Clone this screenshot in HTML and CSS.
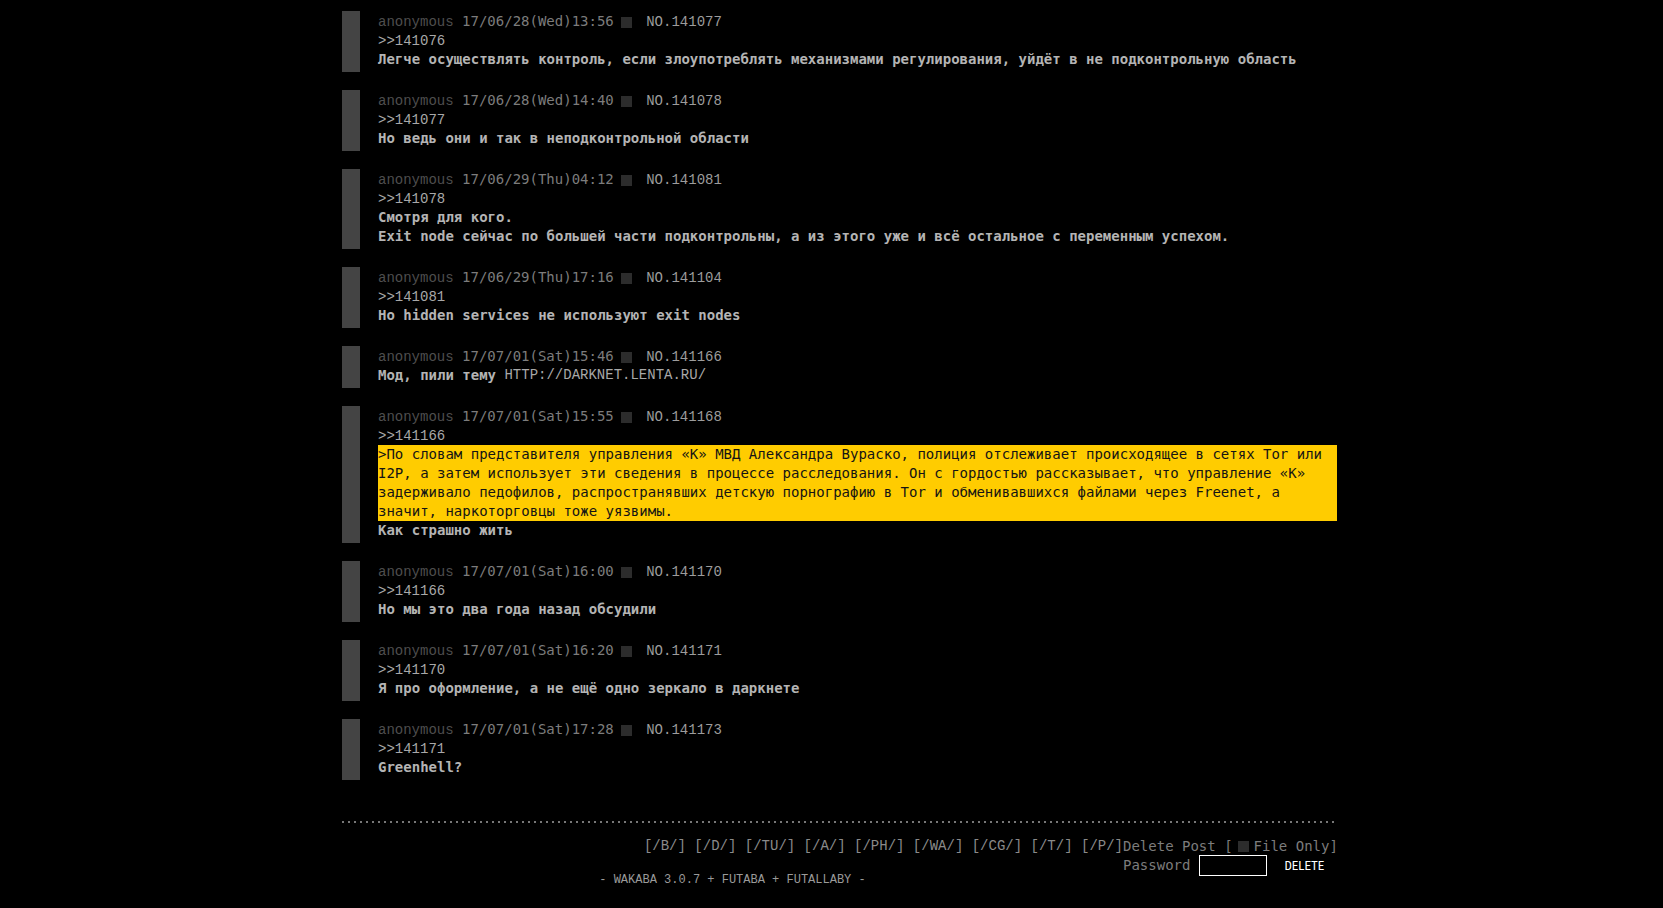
FILE: index.html
```html
<!DOCTYPE html>
<html lang="ru">
<head>
<meta charset="utf-8">
<title>Thread</title>
<link rel="stylesheet" href="styles.css">
</head>
<body>
<div class="board">
  <div class="post">
    <div class="bar"></div>
    <div class="reply">
      <div class="head"><span class="name">anonymous</span> <span class="date">17/06/28(Wed)13:56</span><span class="chk"></span> <a class="no">No.141077</a></div>
      <div class="ref"><a>&gt;&gt;141076</a></div>
      <div class="msg">Легче осуществлять контроль, если злоупотреблять механизмами регулирования, уйдёт в не подконтрольную область</div>
    </div>
  </div>
  <div class="post">
    <div class="bar"></div>
    <div class="reply">
      <div class="head"><span class="name">anonymous</span> <span class="date">17/06/28(Wed)14:40</span><span class="chk"></span> <a class="no">No.141078</a></div>
      <div class="ref"><a>&gt;&gt;141077</a></div>
      <div class="msg">Но ведь они и так в неподконтрольной области</div>
    </div>
  </div>
  <div class="post">
    <div class="bar"></div>
    <div class="reply">
      <div class="head"><span class="name">anonymous</span> <span class="date">17/06/29(Thu)04:12</span><span class="chk"></span> <a class="no">No.141081</a></div>
      <div class="ref"><a>&gt;&gt;141078</a></div>
      <div class="msg">Смотря для кого.<br>Exit node сейчас по большей части подконтрольны, а из этого уже и всё остальное с переменным успехом.</div>
    </div>
  </div>
  <div class="post">
    <div class="bar"></div>
    <div class="reply">
      <div class="head"><span class="name">anonymous</span> <span class="date">17/06/29(Thu)17:16</span><span class="chk"></span> <a class="no">No.141104</a></div>
      <div class="ref"><a>&gt;&gt;141081</a></div>
      <div class="msg">Но hidden services не используют exit nodes</div>
    </div>
  </div>
  <div class="post">
    <div class="bar"></div>
    <div class="reply">
      <div class="head"><span class="name">anonymous</span> <span class="date">17/07/01(Sat)15:46</span><span class="chk"></span> <a class="no">No.141166</a></div>
      <div class="msg">Мод, пили тему <a class="link">http://darknet.lenta.ru/</a></div>
    </div>
  </div>
  <div class="post">
    <div class="bar"></div>
    <div class="reply">
      <div class="head"><span class="name">anonymous</span> <span class="date">17/07/01(Sat)15:55</span><span class="chk"></span> <a class="no">No.141168</a></div>
      <div class="ref"><a>&gt;&gt;141166</a></div>
      <div class="quote">&gt;По словам представителя управления «К» МВД Александра Вураско, полиция отслеживает происходящее в сетях Tor или I2P, а затем использует эти сведения в процессе расследования. Он с гордостью рассказывает, что управление «К» задерживало педофилов, распространявших детскую порнографию в Tor и обменивавшихся файлами через Freenet, а значит, наркоторговцы тоже уязвимы.</div>
      <div class="msg">Как страшно жить</div>
    </div>
  </div>
  <div class="post">
    <div class="bar"></div>
    <div class="reply">
      <div class="head"><span class="name">anonymous</span> <span class="date">17/07/01(Sat)16:00</span><span class="chk"></span> <a class="no">No.141170</a></div>
      <div class="ref"><a>&gt;&gt;141166</a></div>
      <div class="msg">Но мы это два года назад обсудили</div>
    </div>
  </div>
  <div class="post">
    <div class="bar"></div>
    <div class="reply">
      <div class="head"><span class="name">anonymous</span> <span class="date">17/07/01(Sat)16:20</span><span class="chk"></span> <a class="no">No.141171</a></div>
      <div class="ref"><a>&gt;&gt;141170</a></div>
      <div class="msg">Я про оформление, а не ещё одно зеркало в даркнете</div>
    </div>
  </div>
  <div class="post">
    <div class="bar"></div>
    <div class="reply">
      <div class="head"><span class="name">anonymous</span> <span class="date">17/07/01(Sat)17:28</span><span class="chk"></span> <a class="no">No.141173</a></div>
      <div class="ref"><a>&gt;&gt;141171</a></div>
      <div class="msg">Greenhell?</div>
    </div>
  </div>

  <div class="sep"></div>

  <div class="footer">
    <div class="delform">
      <div class="delrow">Delete Post [<span class="chk small"></span>File Only]</div>
      <div class="passrow"><span>Password</span><span class="pass"></span><span class="delbtn">DELETE</span></div>
    </div>
    <div class="nav">[<a>/b/</a>] [<a>/d/</a>] [<a>/tu/</a>] [<a>/a/</a>] [<a>/ph/</a>] [<a>/wa/</a>] [<a>/cg/</a>] [<a>/t/</a>] [<a>/p/</a>]</div>
    <div class="wakaba">- wakaba 3.0.7 + futaba + futallaby -</div>
  </div>
</div>
</body>
</html>
```

FILE: styles.css
```css
body {
  margin: 0;
  padding: 11px 0 0 16px;
  background: #000;
  color: #b8b8b8;
  font: 14px/19px "DejaVu Sans Mono", "Liberation Mono", monospace;
}

.board {
  width: 995px;
  margin: 0 auto;
}

.post {
  display: flex;
  gap: 18px;
  margin-bottom: 18px;
}

.bar {
  flex: none;
  width: 18px;
  background: #444;
}

.reply {
  flex: 1;
  padding: 1px 0 3px;
}

.head, .ref {
  height: 19px;
  white-space: nowrap;
}

.name {
  font-family: "Liberation Mono", monospace;
  color: #4e4e4e;
}

.date {
  color: #7c7c7c;
}

.chk {
  display: inline-block;
  width: 11px;
  height: 11px;
  background: #2c2c2c;
  vertical-align: top;
  margin: 5px 6px 0 7px;
}

.no {
  font-family: "Liberation Mono", monospace;
  text-transform: uppercase;
  color: #9c9c9c;
}

.ref a {
  font-family: "Liberation Mono", monospace;
  color: #a8a8a8;
}

.msg {
  font-weight: bold;
  color: #b4b4b4;
}

.link {
  font-family: "Liberation Mono", monospace;
  font-weight: normal;
  text-transform: uppercase;
  color: #a8a8a8;
  vertical-align: top;
}

.quote {
  background: #ffcc00;
  color: #141414;
}

.sep {
  height: 2px;
  margin-top: 41px;
  background: repeating-linear-gradient(to right, #777 0 2px, transparent 2px 6px);
}

.footer {
  padding-top: 14px;
}

.delform {
  float: right;
  width: 214px;
  color: #7c7c7c;
}

.delrow {
  height: 18px;
  white-space: nowrap;
}

.chk.small {
  margin: 4px 5px 0 5px;
}

.passrow {
  display: flex;
  align-items: center;
  height: 21px;
}

.pass {
  width: 66px;
  height: 19px;
  border: 1px solid #fff;
  margin-left: 9px;
}

.delbtn {
  font-family: "Liberation Sans Narrow", "Roboto Condensed", "Liberation Sans", sans-serif;
  font-stretch: condensed;
  font-size: 13px;
  color: #fff;
  margin-left: 17px;
}

.nav {
  text-align: right;
  padding-right: 3px;
  font-family: "Liberation Mono", monospace;
  color: #8a8a8a;
  text-transform: uppercase;
}

.nav a {
  color: #8a8a8a;
}

.wakaba {
  margin-top: 16px;
  text-align: center;
  font-family: "Liberation Mono", monospace;
  font-size: 12px;
  line-height: 16px;
  color: #9a9a9a;
  text-transform: uppercase;
}
```
